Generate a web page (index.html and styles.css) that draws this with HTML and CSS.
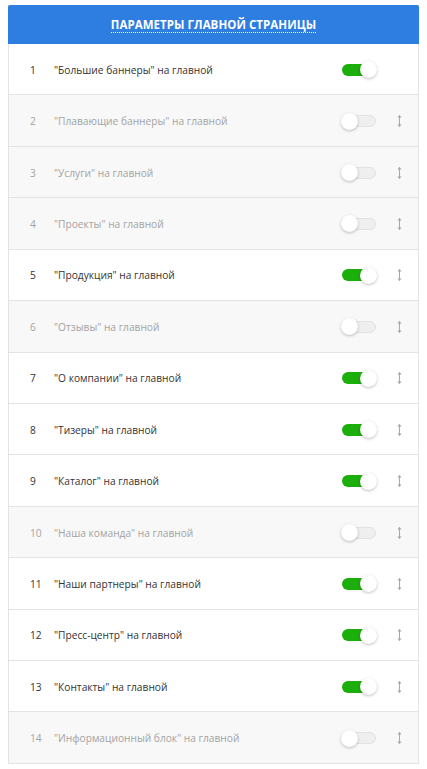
FILE: index.html
```html
<!DOCTYPE html>
<html>
<head>
<meta charset="utf-8">
<link rel="stylesheet" href="styles.css">
</head>
<body>
<div class="card">
  <div class="head"><span class="title">Параметры главной страницы</span></div>
  <div class="row on"><span class="num">1</span><span class="name">"Большие баннеры" на главной</span><span class="tg"><span class="knob"></span></span><span class="drag none"></span></div>
  <div class="row off"><span class="num">2</span><span class="name">"Плавающие баннеры" на главной</span><span class="tg"><span class="knob"></span></span><span class="drag"><svg width="5" height="14" viewBox="0 0 5 14"><path d="M2.5 2.5v9" stroke="#a8a8a8" stroke-width="1"/><path d="M0.5 3.5L2.5 0.8l2 2.7zM0.5 10.5L2.5 13.2l2-2.7z" fill="#a8a8a8"/></svg></span></div>
  <div class="row off"><span class="num">3</span><span class="name">"Услуги" на главной</span><span class="tg"><span class="knob"></span></span><span class="drag"><svg width="5" height="14" viewBox="0 0 5 14"><path d="M2.5 2.5v9" stroke="#a8a8a8" stroke-width="1"/><path d="M0.5 3.5L2.5 0.8l2 2.7zM0.5 10.5L2.5 13.2l2-2.7z" fill="#a8a8a8"/></svg></span></div>
  <div class="row off"><span class="num">4</span><span class="name">"Проекты" на главной</span><span class="tg"><span class="knob"></span></span><span class="drag"><svg width="5" height="14" viewBox="0 0 5 14"><path d="M2.5 2.5v9" stroke="#a8a8a8" stroke-width="1"/><path d="M0.5 3.5L2.5 0.8l2 2.7zM0.5 10.5L2.5 13.2l2-2.7z" fill="#a8a8a8"/></svg></span></div>
  <div class="row on"><span class="num">5</span><span class="name">"Продукция" на главной</span><span class="tg"><span class="knob"></span></span><span class="drag"><svg width="5" height="14" viewBox="0 0 5 14"><path d="M2.5 2.5v9" stroke="#a8a8a8" stroke-width="1"/><path d="M0.5 3.5L2.5 0.8l2 2.7zM0.5 10.5L2.5 13.2l2-2.7z" fill="#a8a8a8"/></svg></span></div>
  <div class="row off"><span class="num">6</span><span class="name">"Отзывы" на главной</span><span class="tg"><span class="knob"></span></span><span class="drag"><svg width="5" height="14" viewBox="0 0 5 14"><path d="M2.5 2.5v9" stroke="#a8a8a8" stroke-width="1"/><path d="M0.5 3.5L2.5 0.8l2 2.7zM0.5 10.5L2.5 13.2l2-2.7z" fill="#a8a8a8"/></svg></span></div>
  <div class="row on"><span class="num">7</span><span class="name">"О компании" на главной</span><span class="tg"><span class="knob"></span></span><span class="drag"><svg width="5" height="14" viewBox="0 0 5 14"><path d="M2.5 2.5v9" stroke="#a8a8a8" stroke-width="1"/><path d="M0.5 3.5L2.5 0.8l2 2.7zM0.5 10.5L2.5 13.2l2-2.7z" fill="#a8a8a8"/></svg></span></div>
  <div class="row on"><span class="num">8</span><span class="name">"Тизеры" на главной</span><span class="tg"><span class="knob"></span></span><span class="drag"><svg width="5" height="14" viewBox="0 0 5 14"><path d="M2.5 2.5v9" stroke="#a8a8a8" stroke-width="1"/><path d="M0.5 3.5L2.5 0.8l2 2.7zM0.5 10.5L2.5 13.2l2-2.7z" fill="#a8a8a8"/></svg></span></div>
  <div class="row on"><span class="num">9</span><span class="name">"Каталог" на главной</span><span class="tg"><span class="knob"></span></span><span class="drag"><svg width="5" height="14" viewBox="0 0 5 14"><path d="M2.5 2.5v9" stroke="#a8a8a8" stroke-width="1"/><path d="M0.5 3.5L2.5 0.8l2 2.7zM0.5 10.5L2.5 13.2l2-2.7z" fill="#a8a8a8"/></svg></span></div>
  <div class="row off"><span class="num">10</span><span class="name">"Наша команда" на главной</span><span class="tg"><span class="knob"></span></span><span class="drag"><svg width="5" height="14" viewBox="0 0 5 14"><path d="M2.5 2.5v9" stroke="#a8a8a8" stroke-width="1"/><path d="M0.5 3.5L2.5 0.8l2 2.7zM0.5 10.5L2.5 13.2l2-2.7z" fill="#a8a8a8"/></svg></span></div>
  <div class="row on"><span class="num">11</span><span class="name">"Наши партнеры" на главной</span><span class="tg"><span class="knob"></span></span><span class="drag"><svg width="5" height="14" viewBox="0 0 5 14"><path d="M2.5 2.5v9" stroke="#a8a8a8" stroke-width="1"/><path d="M0.5 3.5L2.5 0.8l2 2.7zM0.5 10.5L2.5 13.2l2-2.7z" fill="#a8a8a8"/></svg></span></div>
  <div class="row on"><span class="num">12</span><span class="name">"Пресс-центр" на главной</span><span class="tg"><span class="knob"></span></span><span class="drag"><svg width="5" height="14" viewBox="0 0 5 14"><path d="M2.5 2.5v9" stroke="#a8a8a8" stroke-width="1"/><path d="M0.5 3.5L2.5 0.8l2 2.7zM0.5 10.5L2.5 13.2l2-2.7z" fill="#a8a8a8"/></svg></span></div>
  <div class="row on"><span class="num">13</span><span class="name">"Контакты" на главной</span><span class="tg"><span class="knob"></span></span><span class="drag"><svg width="5" height="14" viewBox="0 0 5 14"><path d="M2.5 2.5v9" stroke="#a8a8a8" stroke-width="1"/><path d="M0.5 3.5L2.5 0.8l2 2.7zM0.5 10.5L2.5 13.2l2-2.7z" fill="#a8a8a8"/></svg></span></div>
  <div class="row off"><span class="num">14</span><span class="name">"Информационный блок" на главной</span><span class="tg"><span class="knob"></span></span><span class="drag"><svg width="5" height="14" viewBox="0 0 5 14"><path d="M2.5 2.5v9" stroke="#a8a8a8" stroke-width="1"/><path d="M0.5 3.5L2.5 0.8l2 2.7zM0.5 10.5L2.5 13.2l2-2.7z" fill="#a8a8a8"/></svg></span></div>
</div>
</body>
</html>
```
FILE: styles.css
```css
body {
  margin: 5px 8px 0 8px;
  background: #fff;
  font-family: "Open Sans", "DejaVu Sans", sans-serif;
}
.card {
  width: 411px;
  box-sizing: border-box;
  border-left: 1px solid #e3e3e3;
  border-right: 1px solid #e3e3e3;
  box-shadow: 0 1px 2px rgba(0,0,0,0.04);
}
.head {
  height: 39px;
  margin: 0 -1px;
  background: #2d7ee0;
  border-radius: 2px 2px 0 0;
  display: flex;
  align-items: center;
  justify-content: center;
}
.title {
  color: #fff;
  font-weight: 700;
  font-size: 11.5px;
  text-transform: uppercase;
  letter-spacing: 0.05px;
  padding-bottom: 1px;
  border-bottom: 1px dotted #fff;
  line-height: 13px;
  margin-top: 2px;
}
.row {
  height: 51.43px;
  box-sizing: border-box;
  border-bottom: 1px solid #e3e3e3;
  display: flex;
  align-items: center;
  font-size: 10.2px;
  padding-left: 21px;
  padding-top: 1px;
}
.row.on { background: #fff; color: #333; }
.row.off { background: #f8f8f8; color: #a3a3a3; }
.num { width: 24px; }
.name { flex: 1; }
.tg {
  position: relative;
  width: 34px;
  height: 12px;
  border-radius: 6px;
  box-sizing: border-box;
  margin-right: 21px;
}
.on .tg { background: #1cae0a; }
.off .tg { background: #efefef; border: 1px solid #e2e2e2; }
.knob {
  position: absolute;
  width: 17px;
  height: 17px;
  border-radius: 50%;
  background: #fff;
  box-shadow: 0 1px 3px rgba(0,0,0,0.25);
}
.on .knob { right: -1px; top: -2.5px; }
.off .knob { left: -2px; top: -3.5px; }
.drag {
  width: 5px;
  height: 14px;
  margin-right: 16px;
  display: flex;
}
```
